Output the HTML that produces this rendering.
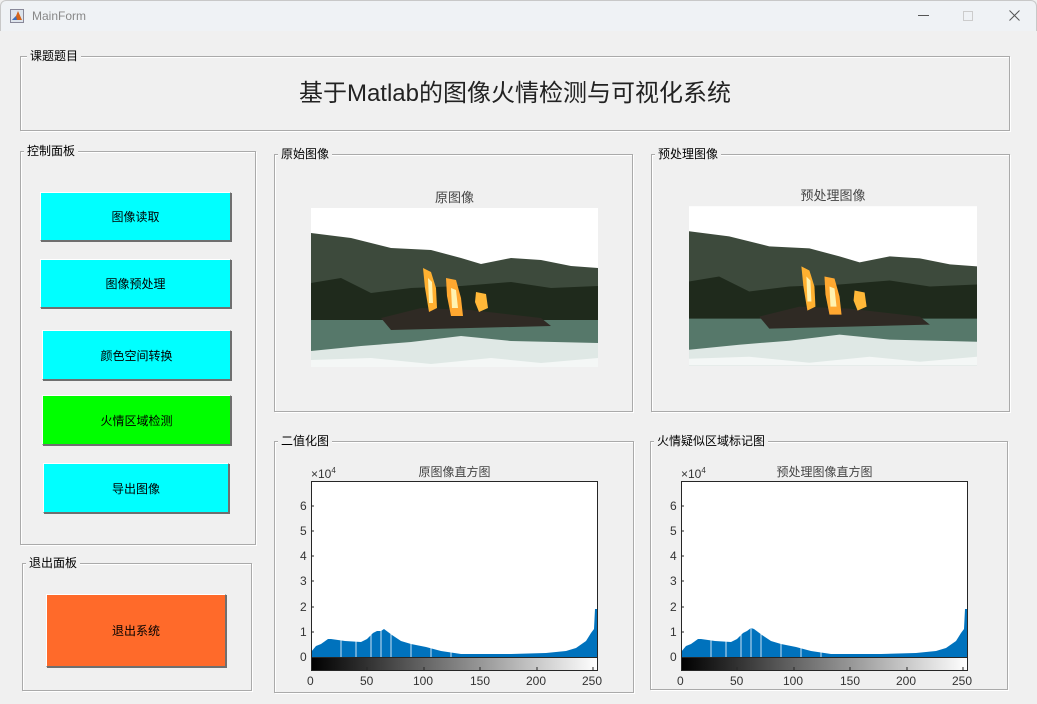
<!DOCTYPE html>
<html><head><meta charset="utf-8"><style>
*{margin:0;padding:0;box-sizing:border-box}
body{width:1037px;height:704px;background:#f0f0f0;position:relative;overflow:hidden;font-family:"Liberation Sans","Noto Sans CJK SC",sans-serif;font-size:12px;color:#000}
.tb{position:absolute;left:0;top:0;width:1037px;height:31px;background:#eff2f5;border:1px solid #c8c8c8;border-bottom:none;border-radius:6px 6px 0 0}
.tb .t{position:absolute;left:31px;top:8px;font-size:12px;color:#888}
.p{position:absolute;border:1px solid #aaa;box-shadow:inset 1px 1px 0 #fff,1px 1px 0 #fff}
.p .l{position:absolute;left:6px;top:-9px;background:#f0f0f0;padding:0 3px;font-size:12px;line-height:16px;white-space:nowrap}
.b{position:absolute;background:#00ffff;border:1px solid;border-color:#fff #6f6f6f #6f6f6f #fff;box-shadow:1px 1px 0 #6f6f6f;display:flex;align-items:center;justify-content:center;font-size:12px}
.ti{position:absolute;font-size:13px;color:#444;text-align:center}
.ax{position:absolute;font-size:12px;color:#333}
svg{position:absolute}
</style></head><body>
<div class="tb"><svg style="left:9px;top:8px" width="14" height="14" viewBox="0 0 14 14"><rect x="0.5" y="0.5" width="13" height="13" fill="#dde4ec" stroke="#889"/><path d="M2 11 L6 7 L8 2 L12 11 Z" fill="#d4641b"/><path d="M2 11 L6 7 L7 11Z" fill="#3a6fc0"/></svg><span class="t">MainForm</span>
<svg style="left:917px;top:14px" width="12" height="2"><rect width="11" height="1" fill="#555"/></svg>
<svg style="left:962px;top:10px" width="11" height="11"><rect x="0.5" y="0.5" width="9" height="9" fill="none" stroke="#ccc"/></svg>
<svg style="left:1008px;top:9px" width="12" height="12"><path d="M0.5 0.5L10.5 10.5M10.5 0.5L0.5 10.5" stroke="#555"/></svg></div>

<div class="p" style="left:20px;top:56px;width:990px;height:75px"><span class="l">课题题目</span>
<div style="position:absolute;left:0;right:0;top:16px;text-align:center;font-size:24px;color:#222">基于Matlab的图像火情检测与可视化系统</div></div>

<div class="p" style="left:20px;top:151px;width:236px;height:394px"><span class="l" style="left:3px">控制面板</span></div>
<div class="b" style="left:40px;top:192px;width:191px;height:49px">图像读取</div>
<div class="b" style="left:40px;top:259px;width:191px;height:49px">图像预处理</div>
<div class="b" style="left:42px;top:330px;width:189px;height:50px">颜色空间转换</div>
<div class="b" style="left:42px;top:395px;width:189px;height:50px;background:#00ff00">火情区域检测</div>
<div class="b" style="left:43px;top:463px;width:186px;height:50px">导出图像</div>

<div class="p" style="left:22px;top:563px;width:230px;height:128px"><span class="l" style="left:3px">退出面板</span></div>
<div class="b" style="left:46px;top:594px;width:180px;height:73px;background:#ff6a2a">退出系统</div>

<div class="p" style="left:274px;top:154px;width:359px;height:258px"><span class="l" style="left:3px">原始图像</span></div>
<div class="p" style="left:651px;top:154px;width:359px;height:258px"><span class="l" style="left:3px">预处理图像</span></div>
<div class="p" style="left:274px;top:441px;width:360px;height:252px"><span class="l" style="left:3px">二值化图</span></div>
<div class="p" style="left:650px;top:441px;width:358px;height:249px"><span class="l" style="left:3px">火情疑似区域标记图</span></div>

<div class="ti" style="left:311px;top:187px;width:287px">原图像</div>
<div class="ti" style="left:689px;top:185px;width:288px">预处理图像</div>

<svg style="left:311px;top:208px" width="287" height="159" viewBox="0 0 287 159">
<rect width="287" height="159" fill="#fff"/>
<path d="M0 25 L40 30 L80 40 L120 42 L150 50 L170 56 L200 50 L230 52 L260 58 L287 60 L287 100 L0 100Z" fill="#3d4a3c"/>
<path d="M0 75 L30 70 L60 85 L100 80 L150 78 L200 74 L240 80 L287 78 L287 120 L0 120Z" fill="#1f2a1c"/>
<rect x="0" y="112" width="287" height="47" fill="#56786a"/>
<path d="M70 110 L110 100 L160 102 L230 110 L240 118 L80 122Z" fill="#2f2a24"/>
<path d="M0 143 L50 138 L100 134 L150 128 L200 133 L287 135 L287 159 L0 159Z" fill="#dfe8e5"/>
<path d="M0 152 L60 150 L120 156 L180 150 L230 155 L287 150 L287 159 L0 159Z" fill="#f4f7f6"/>
<path d="M112 60 L120 64 L125 80 L126 100 L118 104 L114 80Z" fill="#ffb030"/>
<path d="M135 70 L145 72 L150 90 L152 108 L140 108 L136 88Z" fill="#ffa830"/>
<path d="M165 84 L175 86 L177 100 L168 104 L164 94Z" fill="#ffb838"/>
<path d="M117 70 L121 74 L122 95 L118 95Z M140 80 L145 82 L147 100 L141 100Z" fill="#fff2b0"/>
</svg>
<svg style="left:689px;top:206px" width="288" height="160" viewBox="0 0 287 159">
<rect width="287" height="159" fill="#fff"/>
<path d="M0 25 L40 30 L80 40 L120 42 L150 50 L170 56 L200 50 L230 52 L260 58 L287 60 L287 100 L0 100Z" fill="#3d4a3c"/>
<path d="M0 75 L30 70 L60 85 L100 80 L150 78 L200 74 L240 80 L287 78 L287 120 L0 120Z" fill="#1f2a1c"/>
<rect x="0" y="112" width="287" height="47" fill="#56786a"/>
<path d="M70 110 L110 100 L160 102 L230 110 L240 118 L80 122Z" fill="#2f2a24"/>
<path d="M0 143 L50 138 L100 134 L150 128 L200 133 L287 135 L287 159 L0 159Z" fill="#dfe8e5"/>
<path d="M0 152 L60 150 L120 156 L180 150 L230 155 L287 150 L287 159 L0 159Z" fill="#f4f7f6"/>
<path d="M112 60 L120 64 L125 80 L126 100 L118 104 L114 80Z" fill="#ffb030"/>
<path d="M135 70 L145 72 L150 90 L152 108 L140 108 L136 88Z" fill="#ffa830"/>
<path d="M165 84 L175 86 L177 100 L168 104 L164 94Z" fill="#ffb838"/>
<path d="M117 70 L121 74 L122 95 L118 95Z M140 80 L145 82 L147 100 L141 100Z" fill="#fff2b0"/>
</svg>

<div class="ti" style="left:311px;top:463px;width:287px;font-size:12px">原图像直方图</div>
<div class="ax" style="left:311px;top:466px;font-size:12px">×10<sup style="font-size:8px">4</sup></div>
<svg style="left:300px;top:480px" width="310" height="210">
<defs><linearGradient id="g" x1="0" x2="1"><stop offset="0" stop-color="#000"/><stop offset="1" stop-color="#fff"/></linearGradient></defs>
<g transform="translate(11,1)">
<rect x="0" y="0" width="287" height="176" fill="#fff"/>
<path d="M0 176 L0 171 L5 165 L10 163 L17 158 L20 158 L34 160 L50 161 L56 158 L62 152 L66 150 L70 150 L73 148 L81 154 L90 160 L100 163 L115 166 L130 170 L150 173 L200 173 L235 172 L255 170 L265 167 L275 160 L280 152 L283 148 L284 128 L286 128 L286 2 L287 2 L287 176Z" fill="#0072bd"/>
<path d="M30 150V176M45 150V176M60 140V176M70 140V176M80 140V176M100 150V176M120 150V176M140 150V176" stroke="#fff" stroke-width="0.8"/>
<rect x="0.5" y="0.5" width="286" height="176" fill="none" stroke="#262626"/>
<rect x="0.5" y="176.5" width="286" height="13" fill="url(#g)" stroke="#262626"/>
<path d="M0 25h3M0 50h3M0 75h3M0 100h3M0 126h3M0 151h3M56 189v-3M113 189v-3M169 189v-3M226 189v-3M282 189v-3" stroke="#262626"/>
</g>
<g font-size="12" fill="#333" font-family="Liberation Sans,sans-serif">
<text x="0" y="30">6</text><text x="0" y="55">5</text><text x="0" y="80">4</text><text x="0" y="105">3</text><text x="0" y="131">2</text><text x="0" y="156">1</text><text x="0" y="181">0</text>
<text x="7" y="205">0</text><text x="60" y="205">50</text><text x="113" y="205">100</text><text x="170" y="205">150</text><text x="226" y="205">200</text><text x="282" y="205">250</text>
</g></svg>

<div class="ti" style="left:681px;top:463px;width:287px;font-size:12px">预处理图像直方图</div>
<div class="ax" style="left:681px;top:466px;font-size:12px">×10<sup style="font-size:8px">4</sup></div>
<svg style="left:670px;top:480px" width="310" height="210">
<g transform="translate(11,1)">
<rect x="0" y="0" width="287" height="176" fill="#fff"/>
<path d="M0 176 L0 171 L5 165 L10 163 L17 158 L20 158 L34 160 L50 161 L56 158 L62 152 L66 150 L70 147 L73 148 L81 154 L90 160 L100 163 L115 166 L130 170 L150 173 L200 173 L235 172 L255 170 L265 167 L275 160 L280 152 L283 148 L284 128 L286 128 L286 2 L287 2 L287 176Z" fill="#0072bd"/>
<path d="M30 150V176M45 150V176M60 140V176M70 140V176M80 140V176M100 150V176M120 150V176M140 150V176" stroke="#fff" stroke-width="0.8"/>
<rect x="0.5" y="0.5" width="286" height="176" fill="none" stroke="#262626"/>
<rect x="0.5" y="176.5" width="286" height="13" fill="url(#g)" stroke="#262626"/>
<path d="M0 25h3M0 50h3M0 75h3M0 100h3M0 126h3M0 151h3M56 189v-3M113 189v-3M169 189v-3M226 189v-3M282 189v-3" stroke="#262626"/>
</g>
<g font-size="12" fill="#333" font-family="Liberation Sans,sans-serif">
<text x="0" y="30">6</text><text x="0" y="55">5</text><text x="0" y="80">4</text><text x="0" y="105">3</text><text x="0" y="131">2</text><text x="0" y="156">1</text><text x="0" y="181">0</text>
<text x="7" y="205">0</text><text x="60" y="205">50</text><text x="113" y="205">100</text><text x="170" y="205">150</text><text x="226" y="205">200</text><text x="282" y="205">250</text>
</g></svg>
</body></html>
